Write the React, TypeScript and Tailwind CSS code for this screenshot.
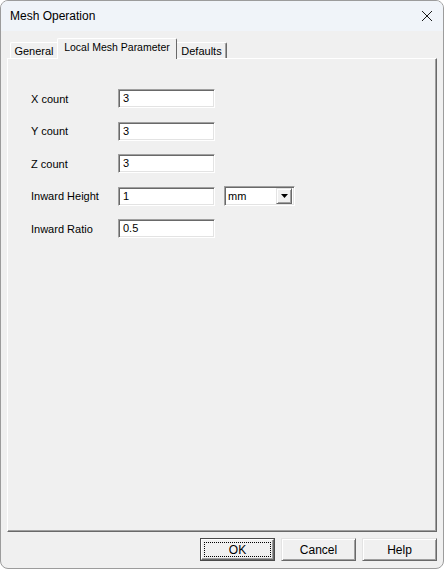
import React from "react";

const font = { fontFamily: '"Liberation Sans", Arial, sans-serif' };

function Field({ value, w = "w-[97px]" }: { value: string; w?: string }) {
  return (
    <div
      className={`${w} h-[19px] bg-white border border-t-[#a0a0a0] border-l-[#a0a0a0] border-b-white border-r-white shadow-[inset_1px_1px_0_#696969,inset_-1px_-1px_0_#e3e3e3] flex items-center pl-[4px] text-[11px] text-black`}
    >
      {value}
    </div>
  );
}

function Row({ label, value, extra }: { label: string; value: string; extra?: React.ReactNode }) {
  return (
    <div className="flex items-center h-[19px]">
      <div className="w-[87px] text-[11px] text-black leading-none pt-[1px]">{label}</div>
      <Field value={value} />
      {extra}
    </div>
  );
}

function Btn({ label, def }: { label: string; def?: boolean }) {
  if (def) {
    return (
      <div className="w-[75px] h-[23px] border border-[#4a4a4a] bg-[#f0f0f0]">
        <div className="w-full h-full border border-t-white border-l-white border-b-[#696969] border-r-[#696969] shadow-[inset_-1px_-1px_0_#a0a0a0] p-[2px]">
          <div className="w-full h-full border border-dotted border-black flex items-center justify-center text-[12px] text-black leading-none">
            {label}
          </div>
        </div>
      </div>
    );
  }
  return (
    <div className="w-[75px] h-[23px] bg-[#f0f0f0] border border-t-[#e3e3e3] border-l-[#e3e3e3] border-b-[#696969] border-r-[#696969] shadow-[inset_1px_1px_0_#ffffff,inset_-1px_-1px_0_#a0a0a0] flex items-center justify-center text-[12px] text-black leading-none">
      {label}
    </div>
  );
}

export default function App() {
  return (
    <div style={font} className="w-[444px] h-[569px] bg-[#f0f0f0] border border-[#9c9c9c] rounded-[8px] overflow-hidden flex flex-col">
      {/* Title bar */}
      <div className="h-[30px] bg-[#f0f4f9] flex items-center justify-between pl-[9px] pr-[10px] shrink-0">
        <span className="text-[12px] text-black">Mesh Operation</span>
        <svg width="12" height="12" viewBox="0 0 12 12">
          <path d="M1 1 L11 11 M11 1 L1 11" stroke="#1a1a1a" strokeWidth="1" fill="none" />
        </svg>
      </div>

      {/* Content */}
      <div className="flex-1 flex flex-col px-[6px] pt-[7px]">
        {/* Tabs */}
        <div className="flex items-end h-[21px] pl-[3px] relative z-10 -mb-[1px]">
          <div className="w-[47px] h-[16px] mb-[1px] border-t border-l border-white rounded-tl-[2px] flex items-center justify-center text-[11px] text-black leading-none pt-[2px]">
            General
          </div>
          <div className="w-[120px] h-[21px] bg-[#f0f0f0] border-t border-l border-white border-r border-r-[#696969] rounded-t-[2px] flex items-start justify-center pt-[3px] text-[10.5px] text-black leading-none">
            Local Mesh Parameter
          </div>
          <div className="w-[50px] h-[16px] mb-[1px] border-t border-white border-r border-r-[#696969] shadow-[inset_-1px_0_0_#a0a0a0] rounded-tr-[2px] flex items-center justify-center text-[11px] text-black leading-none pt-[2px]">
            Defaults
          </div>
        </div>

        {/* Panel */}
        <div className="h-[474px] border border-t-white border-l-white border-b-[#696969] border-r-[#696969] shadow-[inset_-1px_-1px_0_#a0a0a0] pl-[23px] pt-[30px]">
          <div className="flex flex-col gap-[13.5px]">
            <Row label="X count" value="3" />
            <Row label="Y count" value="3" />
            <Row label="Z count" value="3" />
            <Row
              label="Inward Height"
              value="1"
              extra={
                <div className="ml-[9px] w-[71px] h-[20px] bg-white border border-t-[#a0a0a0] border-l-[#a0a0a0] border-b-white border-r-white shadow-[inset_1px_1px_0_#696969,inset_-1px_-1px_0_#e3e3e3] flex items-center justify-between pl-[3px] pr-[2px]">
                  <span className="text-[11px] text-black leading-none pt-[1px]">mm</span>
                  <div className="w-[16px] h-[16px] bg-[#f0f0f0] border border-t-[#e3e3e3] border-l-[#e3e3e3] border-b-[#696969] border-r-[#696969] shadow-[inset_1px_1px_0_#ffffff,inset_-1px_-1px_0_#a0a0a0] flex items-center justify-center">
                    <svg width="7" height="4" viewBox="0 0 7 4">
                      <path d="M0 0 H7 L3.5 4 Z" fill="#000" />
                    </svg>
                  </div>
                </div>
              }
            />
            <Row label="Inward Ratio" value="0.5" />
          </div>
        </div>

        {/* Buttons */}
        <div className="flex justify-end gap-[6px] mt-[6px]">
          <Btn label="OK" def />
          <Btn label="Cancel" />
          <Btn label="Help" />
        </div>
      </div>
    </div>
  );
}
